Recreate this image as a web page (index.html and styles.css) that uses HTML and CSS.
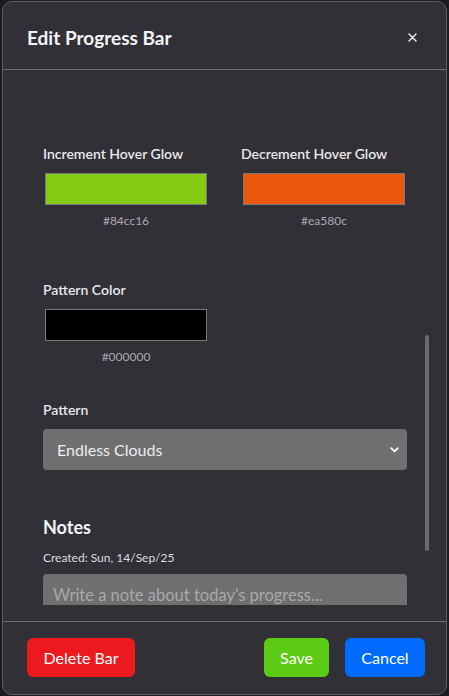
FILE: index.html
```html
<!DOCTYPE html>
<html>
<head>
<meta charset="utf-8">
<link rel="stylesheet" href="styles.css">
</head>
<body>
<div class="modal">
  <div class="modal-header">
    <h2 class="title">Edit Progress Bar</h2>
    <button class="close" aria-label="Close">
      <svg width="9" height="9" viewBox="0 0 9 9"><path d="M1 1L8 8M8 1L1 8" stroke="#f2f2f2" stroke-width="1.4" stroke-linecap="round"/></svg>
    </button>
  </div>
  <div class="modal-body">
    <div class="scroll-area">
      <div class="color-row">
        <div class="color-field">
          <div class="label">Increment Hover Glow</div>
          <div class="swatch swatch-green"></div>
          <div class="hex">#84cc16</div>
        </div>
        <div class="color-field">
          <div class="label">Decrement Hover Glow</div>
          <div class="swatch swatch-orange"></div>
          <div class="hex">#ea580c</div>
        </div>
      </div>
      <div class="color-row row-pattern">
        <div class="color-field">
          <div class="label">Pattern Color</div>
          <div class="swatch swatch-black"></div>
          <div class="hex">#000000</div>
        </div>
      </div>
      <div class="label label-pattern">Pattern</div>
      <div class="select">
        <span>Endless Clouds</span>
        <svg class="chev" width="9" height="6" viewBox="0 0 9 6"><path d="M1.2 1.2L4.5 4.4L7.8 1.2" fill="none" stroke="#ffffff" stroke-width="1.8" stroke-linecap="round" stroke-linejoin="round"/></svg>
      </div>
      <h3 class="notes-title">Notes</h3>
      <div class="created">Created: Sun, 14/Sep/25</div>
      <div class="textarea">Write a note about today's progress...</div>
    </div>
    <div class="scroll-thumb"></div>
  </div>
  <div class="modal-footer">
    <button class="btn btn-delete">Delete Bar</button>
    <div class="footer-right">
      <button class="btn btn-save">Save</button>
      <button class="btn btn-cancel">Cancel</button>
    </div>
  </div>
</div>
</body>
</html>
```

FILE: styles.css
```css
html, body {
  margin: 0;
  padding: 0;
  background: #1c1c20;
}
body {
  font-family: Lato, "Noto Sans", sans-serif;
  width: 449px;
  height: 696px;
  overflow: hidden;
}
.modal {
  box-sizing: border-box;
  margin: 1px 3px 1px 2px;
  width: 445px;
  height: 694px;
  border: 1px solid #5e5e63;
  border-radius: 10px;
  background: #313037;
  display: flex;
  flex-direction: column;
  overflow: hidden;
}
.modal-header {
  height: 68px;
  flex: none;
  box-sizing: border-box;
  padding: 4px 26px 0 24px;
  display: flex;
  align-items: center;
  justify-content: space-between;
  border-bottom: 1px solid #6c6c6e;
}
.title {
  margin: 0;
  font-size: 19px;
  font-weight: 700;
  color: #f4f4f6;
}
.close {
  background: none;
  border: none;
  padding: 0;
  width: 16px;
  height: 16px;
  display: flex;
  align-items: center;
  justify-content: center;
}
.modal-body {
  flex: 1;
  position: relative;
  padding-bottom: 16px;
  display: flex;
  flex-direction: column;
  min-height: 0;
}
.scroll-area {
  flex: 1;
  overflow: hidden;
  padding: 74px 39px 0 40px;
}
.color-row {
  display: flex;
  gap: 16px;
}
.color-field {
  flex: none;
  width: 182px;
  display: flex;
  flex-direction: column;
}
.label {
  font-size: 14px;
  line-height: 20px;
  font-weight: 600;
  color: #e8e8ea;
}
.swatch {
  box-sizing: border-box;
  margin: 9px 0 0 2px;
  width: 162px;
  height: 32px;
  border: 1px solid #7a7a7a;
}
.swatch-green { background: #84cc16; }
.swatch-orange { background: #ea580c; }
.swatch-black { background: #000000; }
.hex {
  width: 166px;
  text-align: center;
  margin-top: 8px;
  font-size: 12px;
  line-height: 16px;
  color: #a9a9ad;
}
.row-pattern {
  margin-top: 51px;
}
.label-pattern {
  margin-top: 35px;
}
.select {
  box-sizing: border-box;
  margin-top: 9px;
  height: 41px;
  border-radius: 4px;
  background: #6f6f6f;
  padding: 0 8px 0 14px;
  display: flex;
  align-items: center;
  justify-content: space-between;
  font-size: 16px;
  color: #eeeeee;
}
.notes-title {
  margin: 45px 0 0;
  font-size: 18px;
  line-height: 24px;
  font-weight: 700;
  color: #f4f4f6;
}
.created {
  margin-top: 11px;
  font-size: 12px;
  line-height: 16px;
  color: #dcdcde;
}
.textarea {
  box-sizing: border-box;
  margin-top: 8px;
  height: 70px;
  border-radius: 4px;
  background: #6f6f6f;
  padding: 10px 10px;
  font-size: 16.5px;
  line-height: 22px;
  color: #a8a8aa;
}
.scroll-thumb {
  position: absolute;
  right: 17px;
  top: 265px;
  width: 4px;
  height: 216px;
  border-radius: 2px;
  background: #6b6b6d;
}
.modal-footer {
  flex: none;
  box-sizing: border-box;
  border-top: 1px solid #6c6c6e;
  padding: 16px 21px 17px 24px;
  display: flex;
  justify-content: space-between;
  align-items: center;
}
.footer-right {
  display: flex;
  gap: 16px;
}
.btn {
  font-family: inherit;
  height: 39px;
  border: none;
  border-radius: 6px;
  font-size: 16px;
  color: #ffffff;
  padding: 0 16px;
}
.btn-delete { background: #ec1a1f; width: 108px; }
.btn-save { background: #5ccb14; width: 65px; }
.btn-cancel { background: #006bff; width: 80px; }
```
